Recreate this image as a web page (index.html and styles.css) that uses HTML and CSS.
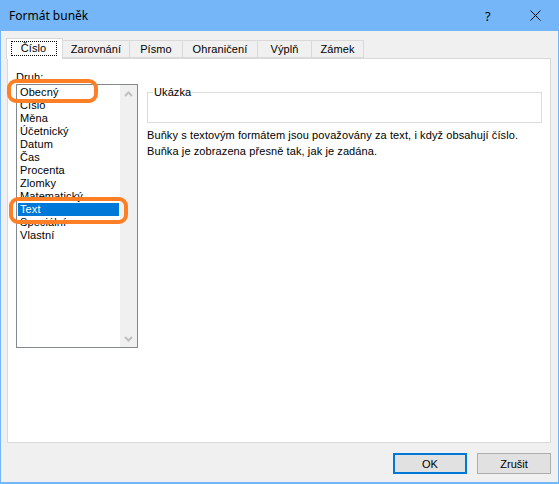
FILE: index.html
```html
<!DOCTYPE html>
<html lang="cs">
<head>
<meta charset="utf-8">
<title>Formát buněk</title>
<link rel="stylesheet" href="styles.css">
</head>
<body>
<div class="window">
  <div class="titlebar">
    <span class="title">Formát buněk</span>
    <span class="help">?</span>
    <span class="close">
      <svg width="11" height="11" viewBox="0 0 11 11"><path d="M0.5 0.5 L10.5 10.5 M10.5 0.5 L0.5 10.5" stroke="#000" stroke-width="1" fill="none"/></svg>
    </span>
  </div>
  <div class="body">
    <div class="tabs">
      <div class="tab tab-cislo selected"><span class="focus">Číslo</span></div>
      <div class="tab tab-zarovnani">Zarovnání</div>
      <div class="tab tab-pismo">Písmo</div>
      <div class="tab tab-ohraniceni">Ohraničení</div>
      <div class="tab tab-vypln">Výplň</div>
      <div class="tab tab-zamek">Zámek</div>
    </div>
    <div class="panel">
      <div class="left">
        <div class="label">Druh:</div>
        <div class="list">
          <div class="items">
            <div class="item">Obecný</div>
            <div class="item">Číslo</div>
            <div class="item">Měna</div>
            <div class="item">Účetnický</div>
            <div class="item">Datum</div>
            <div class="item">Čas</div>
            <div class="item">Procenta</div>
            <div class="item">Zlomky</div>
            <div class="item">Matematický</div>
            <div class="item active">Text</div>
            <div class="item">Speciální</div>
            <div class="item">Vlastní</div>
          </div>
          <div class="scrollbar">
            <div class="arrow">
              <svg width="9" height="6" viewBox="0 0 9 6"><path d="M1 5 L4.5 1.5 L8 5" stroke="#c0c0c0" stroke-width="2" fill="none"/></svg>
            </div>
            <div class="arrow">
              <svg width="9" height="6" viewBox="0 0 9 6"><path d="M1 1 L4.5 4.5 L8 1" stroke="#c0c0c0" stroke-width="2" fill="none"/></svg>
            </div>
          </div>
        </div>
      </div>
      <div class="right">
        <fieldset class="sample">
          <legend>Ukázka</legend>
        </fieldset>
        <p class="desc">Buňky s textovým formátem jsou považovány za text, i když obsahují číslo.<br>Buňka je zobrazena přesně tak, jak je zadána.</p>
      </div>
      <div class="mark mark-obecny"></div>
      <div class="mark mark-text"></div>
    </div>
    <div class="buttons">
      <button class="btn default">OK</button>
      <button class="btn">Zrušit</button>
    </div>
  </div>
</div>
</body>
</html>
```

FILE: styles.css
```css
* { box-sizing: border-box; }
html, body { margin: 0; padding: 0; }
body {
  width: 559px;
  height: 484px;
  font-family: "Liberation Sans", Arial, sans-serif;
  font-size: 11px;
  letter-spacing: 0.1px;
  color: #000;
  background: #f0f0f0;
}
.window {
  width: 559px;
  height: 484px;
  display: flex;
  flex-direction: column;
  border: 1px solid #74b6f8;
  border-top: none;
  border-bottom-width: 2px;
  background: #f0f0f0;
}
.titlebar {
  height: 31px;
  background: #74b6f8;
  display: flex;
  align-items: center;
  margin: 0 -1px;
  padding-left: 9px;
  font-family: "Noto Sans", "Open Sans", sans-serif;
  font-size: 12px;
  letter-spacing: 0;
}
.title { flex: 1; }
.help { width: 12px; margin-right: 33px; font-size: 13px; }
.close { width: 11px; height: 11px; margin-right: 18px; display: flex; }
.body {
  flex: 1;
  padding: 7px 7px 0 5px;
  display: flex;
  flex-direction: column;
}
.tabs {
  height: 20px;
  display: flex;
  align-items: flex-end;
}
.tab {
  height: 18px;
  border: 1px solid #d9d9d9;
  border-left: none;
  background: #f0f0f0;
  display: flex;
  align-items: center;
  justify-content: center;
  padding-bottom: 1px;
}
.tab.selected {
  height: 21px;
  margin-bottom: -1px;
  background: #fff;
  border-left: 1px solid #d9d9d9;
  border-bottom: none;
  position: relative;
  z-index: 1;
  padding-bottom: 2px;
}
.focus {
  display: block;
  width: 46px;
  height: 15px;
  line-height: 13px;
  border: 1px dotted #000;
  text-align: center;
  margin-left: -2px;
}
.tab-cislo { width: 57px; }
.tab-zarovnani { width: 67px; }
.tab-pismo { width: 53px; }
.tab-ohraniceni { width: 75px; }
.tab-vypln { width: 54px; }
.tab-zamek { width: 52px; }
.panel {
  height: 385px;
  width: 544px;
  margin-left: 1px;
  background: #fff;
  border: 1px solid #d9d9d9;
  display: flex;
  padding: 12px 0 0 8px;
  position: relative;
}
.left { width: 122px; }
.label { height: 13px; line-height: 13px; }
.list {
  height: 264px;
  border: 1px solid #828790;
  display: flex;
}
.items {
  flex: 1;
  padding: 1px;
}
.item {
  height: 13px;
  line-height: 13px;
  padding-left: 2px;
  white-space: nowrap;
}
.item.active {
  background: #0078d7;
  color: #fff;
}
.scrollbar {
  width: 17px;
  background: #f0f0f0;
  display: flex;
  flex-direction: column;
  justify-content: space-between;
}
.arrow {
  height: 17px;
  display: flex;
  align-items: center;
  justify-content: center;
}
.right {
  margin-left: 9px;
  margin-top: 15px;
  width: 395px;
}
.sample {
  margin: 0;
  padding: 0;
  height: 37px;
  border: 1px solid #dcdcdc;
}
.sample legend {
  margin-left: 5px;
  padding: 0 1px;
  line-height: 13px;
}
.desc {
  margin: 4px 0 0 0;
  line-height: 16px;
  white-space: nowrap;
}
.mark {
  position: absolute;
  border: 4px solid #ff7f27;
  border-radius: 9px;
}
.mark-obecny { left: -1px; top: 20px; width: 91px; height: 24px; }
.mark-text { left: 1px; top: 138px; width: 119px; height: 27px; }
.buttons {
  display: flex;
  justify-content: flex-end;
  gap: 10px;
  margin-top: 10px;
  padding-right: 0px;
}
.btn {
  width: 74px;
  height: 21px;
  background: #e1e1e1;
  border: 1px solid #adadad;
  font-family: "Liberation Sans", Arial, sans-serif;
  font-size: 11px;
  color: #000;
  padding: 0;
  margin: 0;
}
.btn.default { border: 2px solid #0078d7; }
```
